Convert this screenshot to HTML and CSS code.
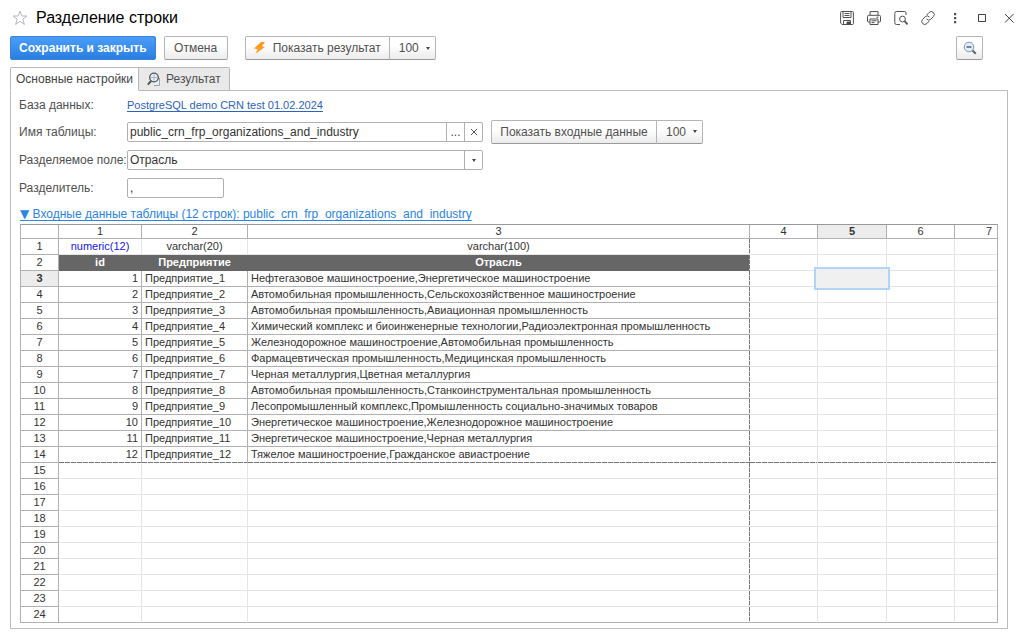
FILE: index.html
```
<!DOCTYPE html>
<html lang="ru">
<head>
<meta charset="utf-8">
<title>Разделение строки</title>
<link rel="stylesheet" href="styles.css">
</head>
<body>
<header class="titlebar">
  <button class="icon-btn star" aria-label="В избранное"><svg width="16" height="16" viewBox="0 0 16 16" fill="none" stroke="#b4b7bc"><path d="M8 1.2 9.8 6h5.2l-4.2 3.2 1.6 5.2L8 11.3l-4.4 3.1 1.6-5.2L1 6h5.2z"/></svg></button>
  <h1 class="title">Разделение строки</h1>
  <div class="window-tools">
    <button class="icon-btn" aria-label="Сохранить"><svg width="14" height="14" viewBox="0 0 14 14" fill="none" stroke="#505050"><path d="M.6 1.5q0-1 1-1h10.8q1 0 1 1v11q0 1-1 1H2L.6 12z"/><path d="M3 .5v6h8v-6M4.5 2.5h5M4.5 4.5h5M3.5 13.5v-4h7v4"/><path d="M7 11h3v2.5H7z" fill="#404040"/></svg></button>
    <button class="icon-btn" aria-label="Печать"><svg width="14" height="14" viewBox="0 0 14 14" fill="none" stroke="#505050"><path d="M3 4V.6h8V4M3 11H1.5q-1 0-1-1V5.500q0-1.200 1.200-1.200h10.600q1.200 0 1.200 1.200V10q0 1-1 1H11M3 8h8v5.500H3zM4.500 9.800h5M4.500 11.600h3M9.500 6.200h2"/></svg></button>
    <button class="icon-btn" aria-label="Предварительный просмотр"><svg width="14" height="14" viewBox="0 0 14 14" fill="none" stroke="#505050"><path d="M6 13.500H2.500q-1.700 0-1.700-1.700V2.200Q.8.500 2.500.500h8q1.500 0 1.500 1.500v2"/><circle cx="8.500" cy="8" r="2.900"/><path d="m10.500 10 3 3.400" stroke-width="1.800"/></svg></button>
    <button class="icon-btn" aria-label="Получить ссылку"><svg width="14" height="14" viewBox="0 0 14 14" fill="none" stroke="#505050" stroke-linecap="round"><path d="m6 3.700 2.100-2.200a2.900 2.900 0 0 1 4.300 4.100L9.800 8.200a2.700 2.700 0 0 1-4 0"/><path d="m8 10.300-2.100 2.200a2.900 2.900 0 0 1-4.300-4.100l2.600-2.600a2.700 2.700 0 0 1 4 0"/></svg></button>
    <button class="icon-btn" aria-label="Ещё"><svg width="14" height="14" viewBox="0 0 14 14" fill="#505050"><path d="M6 2h2.200v2.200H6zM6 6h2.200v2.200H6zM6 10h2.200v2.200H6z"/></svg></button>
    <button class="icon-btn" aria-label="Развернуть"><svg width="14" height="14" viewBox="0 0 14 14" fill="none" stroke="#404040"><path d="M3.500 3.500h7v7h-7z"/></svg></button>
    <button class="icon-btn" aria-label="Закрыть"><svg width="14" height="14" viewBox="0 0 14 14" fill="none" stroke="#404040"><path d="m3 3 8.500 8.500m0-8.500L3 11.500"/></svg></button>
  </div>
</header>

<div class="toolbar">
  <button class="btn primary">Сохранить и закрыть</button>
  <button class="btn cancel">Отмена</button>
  <div class="split">
    <button class="btn run"><svg width="12" height="14" viewBox="0 0 12 14" fill="#ff9a1f"><path d="M7 1h4L8 5.200l3 .6L1.500 13l2.300-4.700L0 7.600z"/></svg>Показать результат</button>
    <button class="btn count">100 <span class="caret"></span></button>
  </div>
  <button class="btn find" aria-label="Уменьшить масштаб"><svg width="14" height="14" viewBox="0 0 14 14" fill="none"><path d="m8.800 8.800 4 4" stroke="#606870" stroke-width="2"/><circle cx="6" cy="6" r="4.800" fill="#e0edfb" stroke="#8796a8"/><path d="M3.500 6h5" stroke="#35506f" stroke-width="1.300"/></svg></button>
</div>

<nav class="tabs">
  <button class="tab active">Основные настройки</button>
  <button class="tab"><svg width="14" height="14" viewBox="0 0 14 14" fill="none"><path d="M5 6h7.500v7.500H7" fill="#e8eef5" stroke="#9ba5b2"/><path d="M4.500 8.500.8 12.700" stroke="#555" stroke-width="2"/><circle cx="7" cy="5.500" r="4.300" fill="#e6eef8" stroke="#555" stroke-width="1.300"/><path d="M4 5.500h6M7 2.500v6" stroke="#a4b5ca"/></svg>Результат</button>
</nav>

<main class="panel">
  <div class="form">
    <span class="label">База данных:</span>
    <div class="line"><a class="db-link" href="#">PostgreSQL demo CRN test 01.02.2024</a></div>

    <label class="label" for="table-name">Имя таблицы:</label>
    <div class="line">
      <div class="field">
        <input id="table-name" value="public_crn_frp_organizations_and_industry">
        <button class="field-btn" aria-label="Выбрать">...</button>
        <button class="field-btn" aria-label="Очистить"><svg width="8" height="8" viewBox="0 0 8 8" stroke="#555"><path d="m1 1 6 6m0-6L1 7"/></svg></button>
      </div>
      <div class="split">
        <button class="btn show-input">Показать входные данные</button>
        <button class="btn count">100 <span class="caret"></span></button>
      </div>
    </div>

    <label class="label" for="split-field">Разделяемое поле:</label>
    <div class="line">
      <div class="field">
        <input id="split-field" value="Отрасль">
        <button class="field-btn" aria-label="Открыть список"><span class="caret"></span></button>
      </div>
    </div>

    <label class="label" for="delimiter">Разделитель:</label>
    <div class="line"><div class="field short"><input id="delimiter" value=","></div></div>
  </div>

  <a class="group-link" href="#"><span class="marker">▼</span> Входные данные таблицы (12 строк): public_crn_frp_organizations_and_industry</a>

  <div class="sheet-frame">
    <table class="sheet">
      <colgroup><col class="c0"><col class="c1"><col class="c2"><col class="c3"><col class="c4"><col class="c5"><col class="c4"><col class="c5"></colgroup>
      <thead><tr><th></th><th>1</th><th>2</th><th>3</th><th>4</th><th class="current">5</th><th>6</th><th>7</th></tr></thead>
      <tbody>
        <tr class="types"><th>1</th><td class="numeric">numeric(12)</td><td>varchar(20)</td><td>varchar(100)</td><td></td><td></td><td></td><td></td></tr>
        <tr class="names"><th>2</th><td>id</td><td>Предприятие</td><td>Отрасль</td><td></td><td></td><td></td><td></td></tr>
        <tr class="data"><th class="current">3</th><td>1</td><td>Предприятие_1</td><td>Нефтегазовое машиностроение,Энергетическое машиностроение</td><td></td><td class="selected"></td><td></td><td></td></tr>
        <tr class="data"><th>4</th><td>2</td><td>Предприятие_2</td><td>Автомобильная промышленность,Сельскохозяйственное машиностроение</td><td></td><td></td><td></td><td></td></tr>
        <tr class="data"><th>5</th><td>3</td><td>Предприятие_3</td><td>Автомобильная промышленность,Авиационная промышленность</td><td></td><td></td><td></td><td></td></tr>
        <tr class="data"><th>6</th><td>4</td><td>Предприятие_4</td><td>Химический комплекс и биоинженерные технологии,Радиоэлектронная промышленность</td><td></td><td></td><td></td><td></td></tr>
        <tr class="data"><th>7</th><td>5</td><td>Предприятие_5</td><td>Железнодорожное машиностроение,Автомобильная промышленность</td><td></td><td></td><td></td><td></td></tr>
        <tr class="data"><th>8</th><td>6</td><td>Предприятие_6</td><td>Фармацевтическая промышленность,Медицинская промышленность</td><td></td><td></td><td></td><td></td></tr>
        <tr class="data"><th>9</th><td>7</td><td>Предприятие_7</td><td>Черная металлургия,Цветная металлургия</td><td></td><td></td><td></td><td></td></tr>
        <tr class="data"><th>10</th><td>8</td><td>Предприятие_8</td><td>Автомобильная промышленность,Станкоинструментальная промышленность</td><td></td><td></td><td></td><td></td></tr>
        <tr class="data"><th>11</th><td>9</td><td>Предприятие_9</td><td>Лесопромышленный комплекс,Промышленность социально-значимых товаров</td><td></td><td></td><td></td><td></td></tr>
        <tr class="data"><th>12</th><td>10</td><td>Предприятие_10</td><td>Энергетическое машиностроение,Железнодорожное машиностроение</td><td></td><td></td><td></td><td></td></tr>
        <tr class="data"><th>13</th><td>11</td><td>Предприятие_11</td><td>Энергетическое машиностроение,Черная металлургия</td><td></td><td></td><td></td><td></td></tr>
        <tr class="data last"><th>14</th><td>12</td><td>Предприятие_12</td><td>Тяжелое машиностроение,Гражданское авиастроение</td><td></td><td></td><td></td><td></td></tr>
        <tr><th>15</th><td></td><td></td><td></td><td></td><td></td><td></td><td></td></tr>
        <tr><th>16</th><td></td><td></td><td></td><td></td><td></td><td></td><td></td></tr>
        <tr><th>17</th><td></td><td></td><td></td><td></td><td></td><td></td><td></td></tr>
        <tr><th>18</th><td></td><td></td><td></td><td></td><td></td><td></td><td></td></tr>
        <tr><th>19</th><td></td><td></td><td></td><td></td><td></td><td></td><td></td></tr>
        <tr><th>20</th><td></td><td></td><td></td><td></td><td></td><td></td><td></td></tr>
        <tr><th>21</th><td></td><td></td><td></td><td></td><td></td><td></td><td></td></tr>
        <tr><th>22</th><td></td><td></td><td></td><td></td><td></td><td></td><td></td></tr>
        <tr><th>23</th><td></td><td></td><td></td><td></td><td></td><td></td><td></td></tr>
        <tr><th>24</th><td></td><td></td><td></td><td></td><td></td><td></td><td></td></tr>
      </tbody>
    </table>
  </div>
</main>
</body>
</html>
```
FILE: styles.css
```
* { box-sizing: border-box; }
body {
  margin: 0;
  padding: 0 16px 8px 10px;
  background: #fff;
  color: #444;
  font: 12px/14px "Liberation Sans", Arial, sans-serif;
}
button, input { font: inherit; color: inherit; margin: 0; }
button { cursor: pointer; }
svg { display: block; flex: none; }

.titlebar { display: flex; align-items: center; height: 36px; }
.icon-btn { display: flex; padding: 0; border: 0; background: none; }
.star { margin: 0 8px 0 2px; }
.title { margin: 0; font-size: 16px; line-height: 20px; font-weight: 400; color: #000; }
.window-tools { display: flex; gap: 13px; margin-left: auto; margin-right: -8px; }

.toolbar { display: flex; align-items: flex-start; gap: 8px; height: 31px; }
.btn {
  display: flex; align-items: center; justify-content: center;
  height: 24px; padding: 0 8px;
  border: 1px solid #b5b5b5; border-bottom-color: #999; border-radius: 2px;
  background: linear-gradient(#fff 40%, #ebebeb);
  color: #505050; white-space: nowrap;
}
.primary { min-width: 145px; border-color: #3a83d8; background: linear-gradient(#4a9ef8, #2a7ee2); color: #fff; font-weight: 700; }
.cancel { min-width: 64px; margin-right: 9px; }
.split { display: flex; }
.split .btn:first-child { border-radius: 2px 0 0 2px; }
.split .btn:last-child { border-radius: 0 2px 2px 0; margin-left: -1px; }
.run { min-width: 145px; gap: 7px; }
.show-input { min-width: 166px; }
.count { min-width: 47px; gap: 7px; padding: 0 4px 0 8px; }
.caret { border: 2px solid transparent; border-top: 3px solid #444; border-bottom: 0; }
.find { width: 27px; padding: 0; margin-left: auto; margin-right: 25px; }

.tabs { display: flex; height: 24px; position: relative; margin-bottom: -1px; }
.tab {
  display: flex; align-items: center; gap: 5px;
  padding: 0 8px; border: 1px solid #b8b8b8; border-left: 0; border-radius: 0 2px 0 0;
  background: #e9e9e9; color: #505050;
}
.active { padding: 0 5px; border-left: 1px solid #b8b8b8; border-bottom-color: #fff; border-radius: 2px 0 0 0; background: #fff; color: #444; }

.panel { border: 1px solid #bcbcbc; padding: 4px 9px 5px 8px; }
.form {
  display: grid; grid-template: 20px 23px 24px 22px / 108px 1fr;
  row-gap: 5px; align-items: center; margin-bottom: 8px;
}
.label { color: #505050; white-space: nowrap; }
.line { display: flex; align-items: center; gap: 8px; }
.db-link { font-size: 11px; color: #2b63bd; text-decoration: underline; text-underline-offset: 2px; }
.field { display: flex; width: 356px; height: 20px; border: 1px solid #b0b0b0; border-radius: 2px; background: #fff; }
.field input { flex: 1; min-width: 0; padding: 0 2px; border: 0; background: none; color: #333; }
.field-btn { display: flex; align-items: center; justify-content: center; width: 18px; padding: 0; border: 0; border-left: 1px solid #b0b0b0; background: none; }
.short { width: 97px; }
.group-link { display: inline-block; margin-left: 1px; color: #2a84e6; text-decoration: underline; text-underline-offset: 2px; }
.marker { font-family: "DejaVu Sans", sans-serif; }

.sheet-frame { overflow: hidden; margin: 3px 0 0 1px; border: 1px solid #b0b0b0; border-top-color: #999; border-bottom: 0; }
.sheet { width: 1002px; table-layout: fixed; border-collapse: separate; border-spacing: 0; color: #333; font-size: 11px; }
.c0 { width: 38px; }
.c1 { width: 83px; }
.c2 { width: 106px; }
.c3 { width: 502px; }
.c4 { width: 68px; }
.c5 { width: 69px; }
.sheet th, .sheet td { height: 16px; padding: 0; line-height: 15px; border: 0 solid #e5e5e5; border-width: 0 1px 1px 0; white-space: nowrap; }
.sheet th { font-weight: 400; text-align: center; border-color: #b0b0b0; }
.sheet thead th { height: 14px; line-height: 13px; }
.sheet .current { background: #ececec; font-weight: 700; }
.sheet tr:last-child td { border-bottom-color: #b0b0b0; }
.types td { text-align: center; }
.types .numeric { color: #1414f0; }
.names td:nth-child(-n+4) { background-color: #666; border-color: #666; color: #fff; font-weight: 700; text-align: center; }
.data td:nth-child(-n+4) { border-color: #b0b0b0; }
.sheet .data td:nth-child(2) { text-align: right; padding-right: 3px; }
.sheet .data td:nth-child(3), .sheet .data td:nth-child(4) { padding-left: 3px; }
/* Dashed print-area limits */
.sheet tbody td:nth-child(4) {
  border-right: 0; padding-right: 1px;
  background-image: repeating-linear-gradient(#777 0 4px, #ddd 4px 5px);
  background-size: 1px 100%; background-position: right top; background-repeat: no-repeat;
  background-origin: border-box;
}
.sheet .last td {
  border-bottom: 0; padding-bottom: 1px;
  background-image: repeating-linear-gradient(90deg, #777 0 5px, #ddd 5px 6px);
  background-size: 100% 1px; background-position: left bottom; background-repeat: no-repeat;
}
.sheet .last td:nth-child(4) {
  background-image: repeating-linear-gradient(#777 0 4px, #ddd 4px 5px), repeating-linear-gradient(90deg, #777 0 5px, #ddd 5px 6px);
  background-size: 1px 100%, 100% 1px; background-position: right top, left bottom;
}
.selected { position: relative; }
.selected::after { content: ""; position: absolute; inset: -4px; border: 2px solid #b3d4fa; background: #f0f0f0; }
```
